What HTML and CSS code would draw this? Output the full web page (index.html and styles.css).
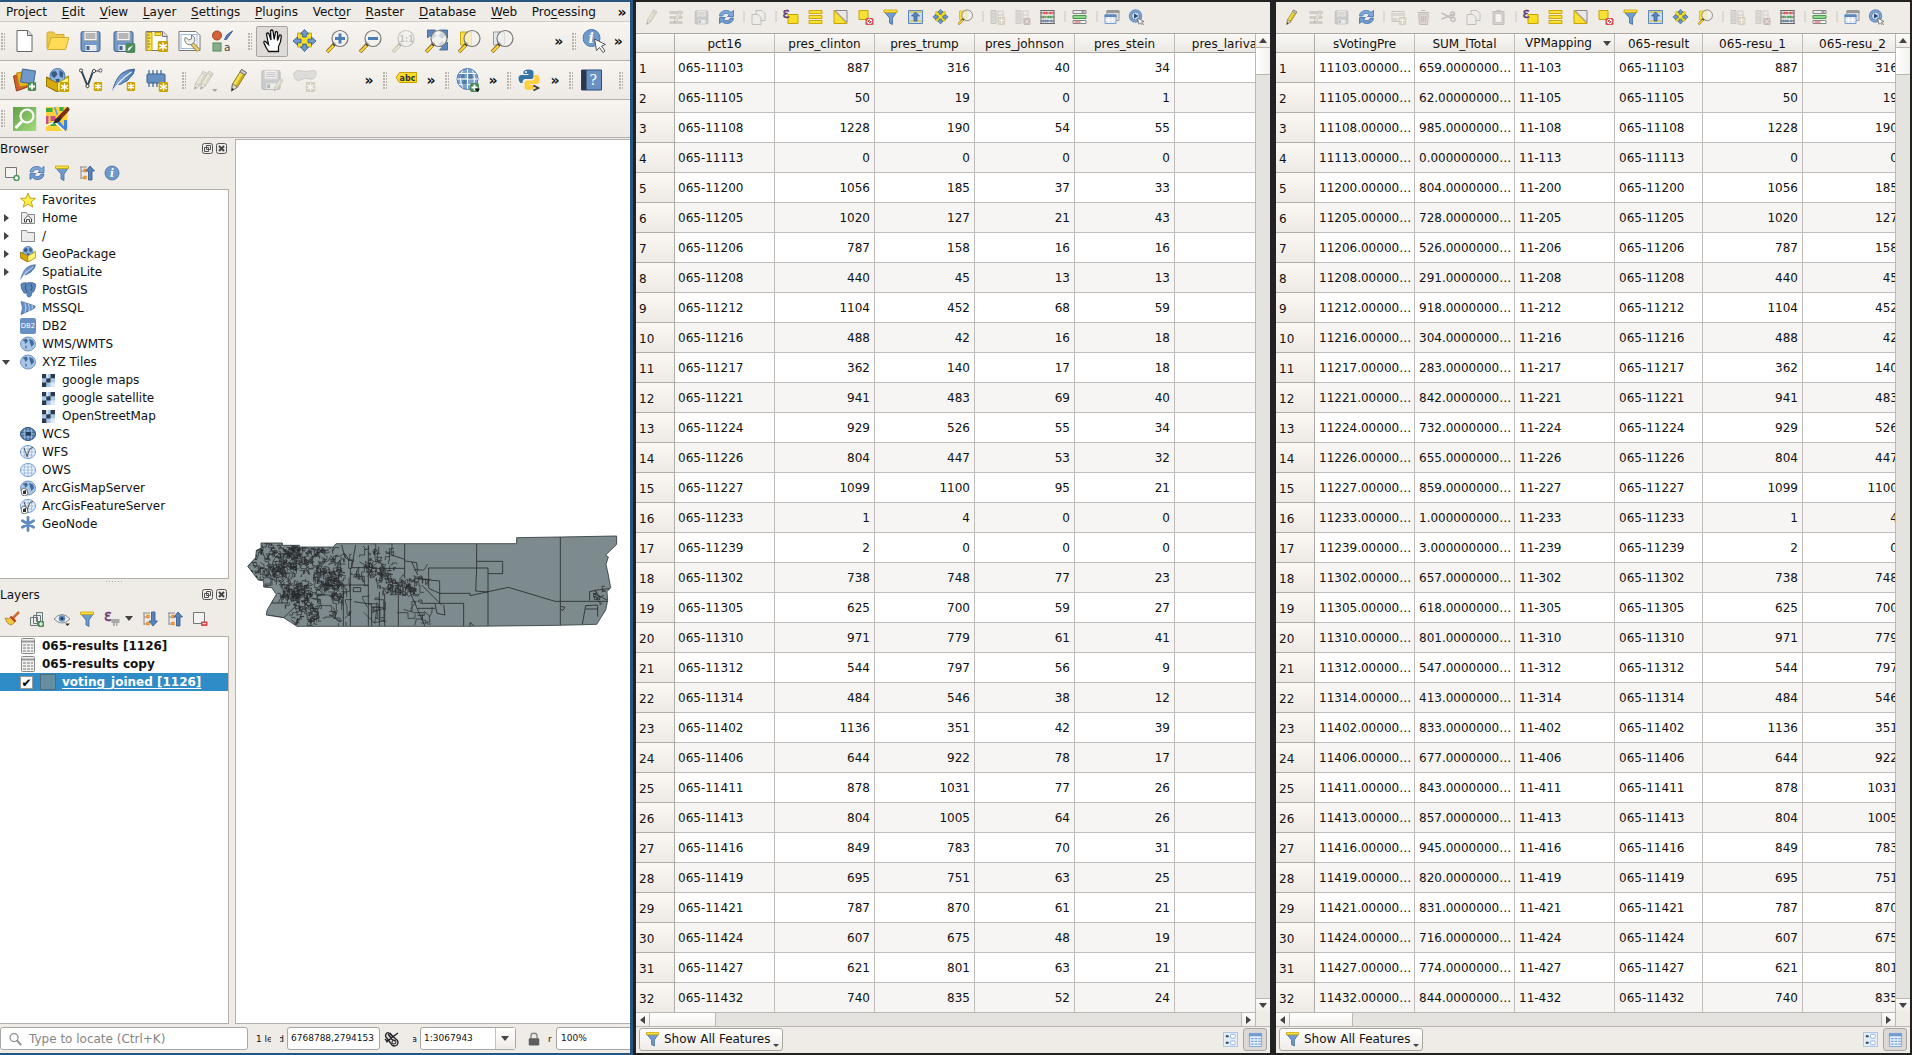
FILE: index.html
```html
<!DOCTYPE html>
<html lang="en">
<head>
<meta charset="utf-8">
<title>QGIS</title>
<link rel="stylesheet" href="styles.css">
</head>
<body>
<svg class="defs" width="0" height="0" aria-hidden="true">
  <defs>
    <linearGradient id="gBlue" x1="0" y1="0" x2="1" y2="0"><stop offset="0" stop-color="#8fb3dc"/><stop offset="1" stop-color="#4a78b0"/></linearGradient>
    <linearGradient id="gGreen" x1="0" y1="0" x2="1" y2="1"><stop offset="0" stop-color="#5f9f45"/><stop offset="1" stop-color="#a5dc80"/></linearGradient>
  </defs>
  <symbol id="badge" viewBox="0 0 11 11"><rect width="11" height="11" rx="2" fill="#c8a300"/><path d="M5.500 1.500v8M1.700 3.500l7.600 4M9.300 3.500l-7.600 4" stroke="#fff" stroke-width="1.500"/></symbol>
  <symbol id="plus" viewBox="0 0 9 9"><rect width="9" height="9" rx="2" fill="#4c8a5a"/><path d="M4.500 1.500v6M1.500 4.500h6" stroke="#fff" stroke-width="1.800"/></symbol>
  <symbol id="new" viewBox="0 0 24 24"><path d="M4.500 1.500h11l4 4.500v16.500h-15z" fill="#fff" stroke="#666" /><path d="M15 1.500v5h5" fill="#ddd" stroke="#666"/></symbol>
  <symbol id="open" viewBox="0 0 24 24"><path d="M1.500 19.500v-15q0-1.500 1.500-1.500h5l2 2.500h8.500v3" fill="#ecc94c" stroke="#d3ab2d"/><path d="M2 20.500L5.500 8.500h18L20 20.500z" fill="#ffdc57" stroke="#d3ab2d"/></symbol>
  <symbol id="save" viewBox="0 0 24 24"><rect x="2.500" y="2.500" width="19" height="20" rx="2" fill="#7299c8" stroke="#42658f"/><rect x="5.500" y="2.500" width="13" height="9" fill="#f6f6f6" stroke="#aaa"/><path d="M7 5h10M7 7h10M7 9h10" stroke="#777"/><rect x="7" y="16" width="11" height="6" fill="#e9e9e9"/><rect x="8" y="17" width="3" height="4" fill="#42658f"/></symbol>
  <symbol id="saveas" viewBox="0 0 24 24"><use href="#save" width="24" height="24"/><rect x="14" y="14" width="10" height="10" rx="2" fill="#4c8a5a"/><path d="M16 22l1-3 5-3-4 5z" fill="#fff"/></symbol>
  <symbol id="layout" viewBox="0 0 24 24"><path d="M1.500 2.500h17l4 4v15h-21z" fill="#fff" stroke="#777"/><path d="M18 2.500v5h5" fill="#ddd" stroke="#777"/><path d="M2.500 3.500h5v18h-5z" fill="#fbe34a" stroke="#c8a300"/><path d="M3 6h2M3 9h3M3 12h2M3 15h3M3 18h2" stroke="#8a7000"/><rect x="10.500" y="3.500" width="6" height="3" fill="#fbe34a" stroke="#c8a300"/><use href="#badge" x="13" y="12" width="11" height="11"/></symbol>
  <symbol id="manager" viewBox="0 0 24 24"><path d="M1.500 2.500h17l4 4v15h-21z" fill="#fff" stroke="#777"/><rect x="3.500" y="5.500" width="16" height="14" fill="none" stroke="#9cb9de"/><path d="M12 12l9 9.500" stroke="#a58b41" stroke-width="4"/><path d="M12 12l9 9.500" stroke="#f0d477" stroke-width="2"/><path d="M8 8a5 5 0 1 0 6-2v4l-3 1z" fill="#eee" stroke="#666" stroke-width=".8"/></symbol>
  <symbol id="style" viewBox="0 0 24 24"><circle cx="6.500" cy="6.500" r="4.500" fill="#d4633a" stroke="#a5401c"/><path d="M14 10.500q1-5 8-8.500l-6 8.500z" fill="#5b89bf" stroke="#3a618f"/><rect x="2.500" y="14" width="8" height="8" fill="#86b08b" stroke="#4c8a5a"/><text x="13.500" y="22" font-size="10.500" fill="#444">a</text></symbol>
  <symbol id="hand" viewBox="0 0 24 24"><path d="M8 22.500Q5 18 3.500 14q-.5-2.500 1.500-1.500l3 3L6 5q1-2 2.500 0l2 6-.5-9q1.500-2 2.500 0l1.200 8.500L15 3q1.500-1.200 2 .5v8L19 6q1.600-.7 1.800 1.500-.3 6-2.800 10v5z" fill="#fff" stroke="#111" stroke-width="1.300"/></symbol>
  <symbol id="pansel" viewBox="0 0 24 24"><path d="M5 4h14v14H5z" fill="#f8df27" stroke="#c9a91c"/><path d="M12 0.500l4 4.500h-2.200v3h-3.600v-3H8zM12 22.500l-4-4.500h2.200v-3h3.600v3H16zM.5 12L5 8v2.200h3.500v3.600H5V16zM23.500 12L19 16v-2.200h-3.500v-3.600H19V8z" fill="#6f9bce" stroke="#345f91" stroke-width=".9"/></symbol>
  <symbol id="lens" viewBox="0 0 24 24"><path d="M9 15L1.500 23" stroke="#7d6418" stroke-width="3.600"/><path d="M8 16.500L1.800 22.700" stroke="#ffd335" stroke-width="2.200"/><path d="M10 14l-2 2" stroke="#222" stroke-width="3"/><circle cx="14.500" cy="9.500" r="8" fill="#f1f1ef" fill-opacity=".75" stroke="#777" stroke-width="1.200"/></symbol>
  <symbol id="zin" viewBox="0 0 24 24"><use href="#lens" width="24" height="24"/><path d="M14.500 4.500v10M9.500 9.500h10" stroke="#4d7db5" stroke-width="3"/></symbol>
  <symbol id="zout" viewBox="0 0 24 24"><use href="#lens" width="24" height="24"/><path d="M9.500 9.500h10" stroke="#4d7db5" stroke-width="3"/></symbol>
  <symbol id="zone" viewBox="0 0 24 24"><use href="#lens" width="24" height="24"/><text x="8" y="13" font-size="8" font-weight="bold" fill="#777">1:1</text></symbol>
  <symbol id="zfull" viewBox="0 0 24 24"><path d="M3 1h8L8.500 3.500l3 3-3 3-3-3L3 9zM23 1v8l-2.500-2.500-3 3-3-3 3-3L15 1zM23 21h-8l2.500-2.500-3-3 3-3 3 3L23 13z" fill="#5b89bf" stroke="#345f91" stroke-width=".8"/><use href="#lens" width="24" height="24"/></symbol>
  <symbol id="zsel" viewBox="0 0 24 24"><path d="M3 3h11v13H3z" fill="#f9e33c" stroke="#c9a91c"/><use href="#lens" width="24" height="24"/></symbol>
  <symbol id="zlay" viewBox="0 0 24 24"><path d="M3 3h11v13H3z" fill="#e3e8e8" stroke="#999"/><use href="#lens" width="24" height="24"/></symbol>
  <symbol id="ident" viewBox="0 0 24 24"><circle cx="9" cy="9" r="8.500" fill="#6f99cb" stroke="#4d78ad"/><text x="6" y="14" font-size="14" font-weight="bold" font-style="italic" class="serif" fill="#fff">i</text><path d="M12 10l11 5.500-4 1.500 3.500 5-2 1.500-3.500-5-3 3z" fill="#fff" stroke="#555"/></symbol>
  <symbol id="addlayer" viewBox="0 0 24 24"><path d="M1 8l9-3 5 14-11 4z" fill="#d35b2c" stroke="#963c18"/><path d="M4 5l11-2 3 14-11 2z" fill="#eab420" stroke="#b4860b"/><path d="M10 1l13 2-2 13-13-2z" fill="#6f99cb" stroke="#42658f"/><use href="#plus" x="15" y="14" width="9" height="9"/></symbol>
  <symbol id="gpkg" viewBox="0 0 24 24"><path d="M1 9l11 5v10L1 18z" fill="#d9a90b" stroke="#8a6a00"/><path d="M23 8l-11 6v10l11-6z" fill="#fff57a" stroke="#a58b00"/><circle cx="12" cy="8" r="7.500" fill="#8fb2dc" stroke="#4d78ad"/><path d="M6 4l4-1 2 3-3 4-3-2zM14 2l4 3-1 5-3-2zM10 11h4v3h-3z" fill="#355c86"/><path d="M.8 9.500L12 15v8.700L.8 18z" fill="#d9a90b" stroke="#8a6a00" stroke-width=".8"/><path d="M23.200 9L12 15v8.700l11.200-6z" fill="#fff57a" stroke="#a58b00" stroke-width=".8"/></symbol>
  <symbol id="newgpkg" viewBox="0 0 24 24"><use href="#gpkg" width="24" height="24"/><use href="#badge" x="14" y="14" width="10" height="10"/></symbol>
  <symbol id="vlayer" viewBox="0 0 24 24"><path d="M3 3l6 15 5-15h7" fill="none" stroke="#445"/><path d="M3 3l6 15 5-13" fill="none" stroke="#34495e" stroke-width="2"/><g fill="#fff" stroke="#444"><circle cx="2.500" cy="2.500" r="1.600"/><circle cx="9" cy="18" r="1.600"/><circle cx="15.500" cy="3" r="1.600"/><circle cx="22" cy="2.500" r="1.600"/></g><use href="#badge" x="15" y="14" width="9" height="9"/></symbol>
  <symbol id="feather" viewBox="0 0 24 24"><path d="M1 23Q4 11 10 5.500 15 1.500 23 1q0 5-5 9-1.500 3-5 4-4 3.500-7.500 2z" fill="url(#gBlue)" stroke="#3a618f"/><path d="M1 23Q8 12 20 4" fill="none" stroke="#e8f0fa" stroke-width="1.300"/></symbol>
  <symbol id="newfeather" viewBox="0 0 24 24"><use href="#feather" width="24" height="24"/><use href="#badge" x="15" y="14" width="9" height="9"/></symbol>
  <symbol id="chip" viewBox="0 0 24 24"><path d="M4.500 2v17M8.500 2v17M12.500 2v17M16.500 2v17" stroke="#3a618f" stroke-width="1.200"/><rect x="2.500" y="6" width="18" height="9" rx="1" fill="#6790c2" stroke="#3a618f"/><use href="#badge" x="14" y="14" width="10" height="10"/></symbol>
  <symbol id="pencil" viewBox="0 0 24 24"><path d="M5 23l1-7L15 1.500l5 3L11 19z" fill="#f3db45" stroke="#8a7a20"/><path d="M10 18L18.500 4" stroke="#c3a51c" stroke-width="1.500"/><path d="M15 1.500l5 3-1.500 2.500-5-3z" fill="#c7c7c7" stroke="#777"/><path d="M5 23l1-7 5 3z" fill="#ecdcb8" stroke="#777"/><path d="M5 23l.5-3 2 1.200z" fill="#222"/></symbol>
  <symbol id="pencils" viewBox="0 0 24 24"><use href="#pencil" x="-3" width="20" height="24"/><use href="#pencil" x="3" width="20" height="24"/><path d="M18.500 21h5.500l-2.700 3z" fill="#333"/></symbol>
  <symbol id="savepen" viewBox="0 0 24 24"><use href="#save" width="23" height="23"/><use href="#pencil" x="12" y="9" width="14" height="15"/></symbol>
  <symbol id="shape" viewBox="0 0 24 24"><path d="M1 6q2-5 8-3 4 1 8 0 7-2 7 3-1 6-7 5-5-2-9 1-6 2-7-6z" fill="#bbb" stroke="#888"/><use href="#badge" x="13" y="14" width="10" height="10"/></symbol>
  <symbol id="abc" viewBox="0 0 24 24"><path d="M2.500 9.500L6 4.500h17v10H6z" fill="#f9dc2b" stroke="#c8a300"/><text x="6" y="12.500" font-size="8" font-weight="bold" fill="#333">abc</text></symbol>
  <symbol id="wglobe" viewBox="0 0 24 24"><circle cx="12" cy="11" r="10.500" fill="#7ba3d2" stroke="#4d78ad"/><path d="M12 1v20M1.500 11h21M3.500 5.500h17M3.500 16.500h17M7 2.500q-4 8 0 17M17 2.500q4 8 0 17" fill="none" stroke="#fff"/><path d="M4 6h5v4H4zM13 6h4v5h-4zM7 12h4v5H7z" fill="#315b8d" opacity=".55"/><use href="#plus" x="14.500" y="15" width="9" height="9"/><path d="M19 20.500h6L22 24z" fill="#111"/></symbol>
  <symbol id="python" viewBox="0 0 24 24"><path d="M6 7V4q0-2.500 5-2.500T16 4v5q0 2-2 2H8q-3 0-3 4H3q-2-1-2-4.500T4 7h7V6H6z" fill="#3873a5"/><path d="M16 7h3q3 0 3 4.500T19 16h-7v1h5v2.500Q17 22 12 22t-5-2.500V15q0-2.500 2.500-2.500H14q3 0 3-3z" fill="#ffcf3f"/><circle cx="8.500" cy="4" r="1" fill="#fff"/><path d="M16 17.500l5 2.500-5 2.500" fill="none" stroke="#333" stroke-width="1.500"/></symbol>
  <symbol id="book" viewBox="0 0 24 24"><path d="M2 2h20v20H2z" fill="#6890c3" stroke="#2f4d73"/><path d="M2 2h5v20H2z" fill="#28394f"/><text x="10" y="17" font-size="14" class="serif" fill="#fff">?</text></symbol>
  <symbol id="glens" viewBox="0 0 24 24"><path d="M0 0h24v24H0z" fill="url(#gGreen)"/><circle cx="14.500" cy="9" r="6.500" fill="none" stroke="#fff" stroke-width="2.200"/><path d="M10 14l-7 7" stroke="#fff" stroke-width="3"/></symbol>
  <symbol id="osm" viewBox="0 0 24 24"><path d="M0 0h22v24H0z" fill="#fbd23e"/><path d="M0 1h7v4H0zM5 15h6v4H5zM14 0h4v4h-4z" fill="#3aae3e"/><path d="M0 9h3v8H0zM5 9h5v5H5z" fill="#c94f86"/><path d="M12 14l8 10M20 13v9" fill="none" stroke="#3f82e0" stroke-width="3"/><path d="M9 0l3 8" stroke="#5c9be8" stroke-width="1.500"/><path d="M0 19l9-4 10 9" fill="none" stroke="#fff" stroke-width="1.500"/><path d="M23.500 1L13 12" stroke="#7d2d0a" stroke-width="4"/><path d="M14 10q-5 1-5 4-1 2-2 2 6 1 9-4z" fill="#2d2a25"/></symbol>
  <symbol id="addsq" viewBox="0 0 16 16"><path d="M1.500 2.500h11v10h-11z" fill="#f4f3f1" stroke="#777"/><circle cx="12.500" cy="13" r="2.500" fill="#fff" stroke="#4c9a58" stroke-width="1.500"/></symbol>
  <symbol id="remsq" viewBox="0 0 16 16"><path d="M1.500 1.500h11v11h-11z" fill="#f4f3f1" stroke="#777"/><rect x="9" y="10.500" width="6.500" height="4.500" rx="1" fill="#d9404a"/><path d="M10.500 12.700h3.500" stroke="#fff"/></symbol>
  <symbol id="refresh" viewBox="0 0 16 16"><path d="M1 7Q1.500 1.500 8 1.500q3 0 4.500 2L15 1.500V7.500H9L11 5.500Q6 2.500 4 7z" fill="#7fa9da" stroke="#3f70aa" stroke-width=".8"/><path d="M15 9q-.5 5.500-7 5.500-3 0-4.500-2L1 14.500V8.500h6L5 10.500q5 3 7-1.500z" fill="#6f9bd0" stroke="#3f70aa" stroke-width=".8"/></symbol>
  <symbol id="funnel" viewBox="0 0 16 16"><path d="M1.500 2.500h13L10 9v6.500L7 14V9z" fill="#6f9bce" stroke="#3f6a9f" stroke-width=".8"/><path d="M1.500 1h13v2.500h-13z" fill="#fae04a" stroke="#c8a300" stroke-width=".8"/></symbol>
  <symbol id="up" viewBox="0 0 16 16"><path d="M1 2h7M2 2v12M2 6h4M2 13h4" fill="none" stroke="#888"/><path d="M5 4.500h2v2H5zM5 11.500h2v2H5z" fill="#fff" stroke="#f08a1c" stroke-width="1.300"/><path d="M11 1l4.500 5H13v9H9.500V6H7z" fill="#5685bd" stroke="#2f5789" stroke-width=".8"/></symbol>
  <symbol id="down" viewBox="0 0 16 16"><path d="M1 2h7M2 2v12M2 6h4M2 13h4" fill="none" stroke="#888"/><path d="M5 4.500h2v2H5zM5 11.500h2v2H5z" fill="#fff" stroke="#f08a1c" stroke-width="1.300"/><path d="M11 15l4.500-5H13V1H9.500v9H7z" fill="#5685bd" stroke="#2f5789" stroke-width=".8"/></symbol>
  <symbol id="info" viewBox="0 0 16 16"><circle cx="8" cy="8" r="7" fill="#6f99cb" stroke="#557fb3"/><text x="6" y="12" font-size="10.500" font-weight="bold" font-style="italic" class="serif" fill="#fff">i</text></symbol>
  <symbol id="star" viewBox="0 0 16 16"><path d="M8 1l2 5.200 5.500.2-4.300 3.400 1.600 5.400L8 12l-4.800 3.200 1.600-5.400L.5 6.400 6 6.200z" fill="#fdee49" stroke="#c2a41e"/></symbol>
  <symbol id="folder" viewBox="0 0 16 16"><path d="M1.500 2.500h5l1 2h7v9h-13z" fill="#ececec" stroke="#8b8b8b"/></symbol>
  <symbol id="home" viewBox="0 0 16 16"><use href="#folder" width="16" height="16"/><path d="M4.500 9L8 5.500 11.500 9v3H9.500V9.500h-3V12h-2z" fill="#fff" stroke="#333" stroke-width=".9"/></symbol>
  <symbol id="pg" viewBox="0 0 16 16"><path d="M1 2q3-2 6-1 6-1.500 8.500 1 .5 4-2 8H12q-.3 5-3 5t-2-5q-1 2-3 1Q.5 7 1 2z" fill="#5b87bb" stroke="#3c6595" stroke-width=".8"/><path d="M6 2q-2 4 1 8M11 2q2 4 0 7" fill="none" stroke="#294d77" stroke-width=".8"/></symbol>
  <symbol id="ms" viewBox="0 0 16 16"><path d="M1 1.500L15 6q0 2-1 2.500L1 14.500Q4 8 1 1.500z" fill="#638fc3" stroke="#41699a" stroke-width=".8"/><path d="M5 3q2 5 0 9.500M8.500 4q1.500 4 .5 7M12 5q.8 3 0 4" fill="none" stroke="#dbe7f5" stroke-width=".8"/></symbol>
  <symbol id="db2" viewBox="0 0 16 16"><rect width="16" height="16" rx="2" fill="#668fc4"/><text x=".8" y="9.700" font-size="6.800" fill="#fff">DB2</text></symbol>
  <symbol id="globe" viewBox="0 0 16 16"><ellipse cx="8" cy="8" rx="7.500" ry="7" fill="#a9c5e6" stroke="#7397c2"/><path d="M2.500 4l4-1.500L8 5 5.500 8l-1-2.500zM9 3l4 1.500 1 3.500-2.500 3L10 7zM5 9.500l2 1-1 3z" fill="#3f6a9a"/></symbol>
  <symbol id="tiles" viewBox="0 0 13 13"><path d="M0 0h13v13H0z" fill="#a9c6e9"/><path d="M0 0h4.300v4.300H0zM8.600 0H13v4.300H8.600zM4.300 4.300h4.300v4.300H4.300zM0 8.600h4.300V13H0z" fill="#2b3b50"/><path d="M4.300 0h2v4.300h-2zM8.600 8.600H13V13H8.600z" fill="#dfe9f5"/></symbol>
  <symbol id="wcs" viewBox="0 0 16 16"><ellipse cx="8" cy="8" rx="7.500" ry="6.500" fill="#416b9a" stroke="#2c4f79"/><path d="M8 2v12M1 8h14M2.500 5h11M2.500 11h11M5 2.500q-2 5.500 0 11M11 2.500q2 5.500 0 11" fill="none" stroke="#a9c8ea" stroke-width=".8"/><path d="M6 6h5v3.500H6z" fill="#1f3d60"/></symbol>
  <symbol id="ows" viewBox="0 0 16 16"><ellipse cx="8" cy="8" rx="7.500" ry="6.500" fill="#f4f8fd" stroke="#6f97cd"/><path d="M8 2v12M1 8h14M2.500 5h11M2.500 11h11M5 2.500q-2 5.500 0 11M11 2.500q2 5.500 0 11" fill="none" stroke="#8fb2de" stroke-width=".8"/></symbol>
  <symbol id="wfs" viewBox="0 0 16 16"><use href="#ows" width="16" height="16"/><path d="M4 4l3 8 3-7.500 3-1" fill="none" stroke="#555"/><circle cx="7" cy="12" r="1" fill="#666"/></symbol>
  <symbol id="ams" viewBox="0 0 16 16"><use href="#globe" width="16" height="16"/><path d="M1 10l3-2 3 2 1 4-3 2-3-1z" fill="#fff" stroke="#555" stroke-width=".8"/><path d="M3 11l3-1v4H3z" fill="#333"/></symbol>
  <symbol id="afs" viewBox="0 0 16 16"><use href="#wfs" width="16" height="16"/><path d="M1 10l3-2 3 2 1 4-3 2-3-1z" fill="#fff" stroke="#555" stroke-width=".8"/><path d="M3 11l3-1v4H3z" fill="#333"/></symbol>
  <symbol id="gnode" viewBox="0 0 16 16"><path d="M8 1.500v13M2.400 4.700l11.200 6.600M13.600 4.700L2.400 11.300" stroke="#5f8bc0" stroke-width="2.800" stroke-linecap="round"/></symbol>
  <symbol id="brush" viewBox="0 0 16 16"><path d="M15 1L8 8" stroke="#cf6d28" stroke-width="2.500"/><path d="M1 7q4 1.500 6-1l4.500 4.500q-3 3.500-5.500 3.500Q2 11.500 1 7z" fill="#ecc744" stroke="#b37c1e" stroke-width=".8"/><path d="M6.500 5.500l5 5" stroke="#c23a1d" stroke-width="2.300"/></symbol>
  <symbol id="group" viewBox="0 0 16 16"><path d="M1.500 6.500h7v8h-7zM4.500 4.500h7v8h-7zM7.500 1.500h6v9h-6z" fill="#ecebe9" stroke="#677"/><use href="#plus" x="9" y="10" width="6" height="6"/></symbol>
  <symbol id="eye" viewBox="0 0 16 16"><path d="M0 8q8-9 16 0-8 8-16 0z" fill="#f3f3f3" stroke="#888"/><circle cx="8" cy="7.500" r="3.300" fill="#5f8cc2"/><circle cx="8" cy="7.500" r="1.500" fill="#1f3d60"/><path d="M11 12.500h5L13.500 15z" fill="#333"/></symbol>
  <symbol id="eps" viewBox="0 0 16 16"><text x="0" y="10" font-size="15" fill="#70407c" stroke="#70407c" stroke-width=".5">ε</text><path d="M7.500 8h8v4h-2v3h-1.500v-3H11v3H9v-3H7.500z" fill="#aaa"/></symbol>
  <symbol id="tbl" viewBox="0 0 16 16"><rect x="1.500" y=".5" width="13" height="15" rx="1" fill="#f1f1ef" stroke="#888"/><path d="M2 3.500h12" stroke="#999" stroke-width="2"/><path d="M3 7h10M3 10h10M3 13h10" stroke="#777" stroke-dasharray="3 1"/></symbol>
  <symbol id="multi" viewBox="0 0 16 16"><path d="M1 2h13v3H1zM1 7h13v3H1zM1 12h13v3H1z" fill="#999"/><use href="#pencil" x="3" y="0" width="13" height="15"/></symbol>
  <symbol id="copy" viewBox="0 0 16 16"><path d="M5.500 1.500h6l3 3v7h-9z" fill="#eee" stroke="#777"/><path d="M1.500 5.500h6l3 3v7h-9z" fill="#eee" stroke="#777"/></symbol>
  <symbol id="paste" viewBox="0 0 16 16"><path d="M2.500 2.500h11v13h-11z" fill="#aaa" stroke="#777"/><path d="M4.500 4.500h5l2 2v7h-7z" fill="#fff" stroke="#888"/><path d="M6 1h4v2H6z" fill="#777"/></symbol>
  <symbol id="cut" viewBox="0 0 16 16"><path d="M1 4l10 5M1 10l13-5" stroke="#777" stroke-width="1.500"/><circle cx="12.500" cy="10.500" r="2" fill="none" stroke="#777" stroke-width="1.500"/><circle cx="12" cy="5" r="2" fill="none" stroke="#777" stroke-width="1.500"/></symbol>
  <symbol id="trash" viewBox="0 0 16 16"><path d="M3 5h10l-1 10.500H4z" fill="#dbaaaa" stroke="#a66"/><path d="M2 3.500h12M6 1.500h4M6 7v6M8 7v6M10 7v6" stroke="#a66" stroke-width="1.200"/></symbol>
  <symbol id="addrow" viewBox="0 0 16 16"><path d="M1.500 2.500h12v10h-12z" fill="#eee" stroke="#888"/><path d="M1 4h13v3H1zM1 9h6v3H1z" fill="#c9b18f"/><use href="#badge" x="8" y="8" width="8" height="8"/></symbol>
  <symbol id="selexp" viewBox="0 0 16 16"><path d="M5.500 5.500h10v9h-10z" fill="#f8df27" stroke="#c8a300"/><text x="0" y="9" font-size="13.500" fill="#623a70" stroke="#623a70" stroke-width=".5">ε</text></symbol>
  <symbol id="selall" viewBox="0 0 16 16"><path d="M1.500 1.500h13v3h-13zM1.500 6.500h13v3h-13zM1.500 11.500h13v3h-13z" fill="#f9e034" stroke="#c8a300" stroke-width=".9"/></symbol>
  <symbol id="invert" viewBox="0 0 16 16"><path d="M1.500 1.500v13h13z" fill="#f9e034" stroke="#c8a300"/><path d="M2.500 1.500h12v12z" fill="#e9e9e9" stroke="#888"/></symbol>
  <symbol id="desel" viewBox="0 0 16 16"><path d="M1.500 1.500h9v9h-9z" fill="#f9e034" stroke="#c8a300"/><rect x="8" y="9" width="8" height="7" rx="1.500" fill="#d84a50"/><circle cx="12" cy="12.500" r="2.300" fill="none" stroke="#fff"/><path d="M10.500 14l3-3" stroke="#fff"/></symbol>
  <symbol id="totop" viewBox="0 0 16 16"><path d="M1 1.500h14v13H1z" fill="#c9daee" stroke="#5b87bb"/><path d="M2 3h12M2 12h12" stroke="#d8c552" stroke-width="1.500"/><path d="M8 3l4 4H9.500v5h-3V7H4z" fill="#5685bd" stroke="#2f5789" stroke-width=".7"/></symbol>
  <symbol id="newcol" viewBox="0 0 16 16"><path d="M1.500 1.500h5v13h-5z" fill="#bbb" stroke="#888"/><path d="M8.500 2v12h5V2zM8 6h6M2 5h4M2 8h4M2 11h4" fill="none" stroke="#999"/><use href="#badge" x="8" y="8" width="8" height="8"/></symbol>
  <symbol id="delcol" viewBox="0 0 16 16"><path d="M1.500 1.500h5v13h-5z" fill="#dbb" stroke="#b88"/><path d="M8.500 2v12h5V2zM8 6h6M2 5h4M2 8h4M2 11h4" fill="none" stroke="#a99"/><rect x="9" y="9" width="7" height="7" rx="1" fill="#d55"/><path d="M10.500 10.500l4 4M14.500 10.500l-4 4" stroke="#fff"/></symbol>
  <symbol id="abacus" viewBox="0 0 16 16"><path d="M1.500 1v14M14.500 1v14M.5 14.500h15M1 1.500h14M1 4h14M1 8h14M1 12h14" fill="none" stroke="#666"/><g stroke-width="2.500"><path d="M4 4h4M10 4h3" stroke="#e25050" stroke-dasharray="1.800 .5"/><path d="M3 8h3M8 8h5" stroke="#45a456" stroke-dasharray="1.800 .5"/><path d="M3 12h6M11 12h2" stroke="#5b87bb" stroke-dasharray="1.800 .5"/></g></symbol>
  <symbol id="cond" viewBox="0 0 16 16"><path d="M1.500 1.500h13v3h-13z" fill="#eee" stroke="#888"/><path d="M1.500 6.500h13v3h-13z" fill="#8fd88f" stroke="#4a9a50"/><path d="M1.500 11.500h13v3h-13z" fill="#fff" stroke="#888"/><path d="M3 13h6" stroke="#d33"/><path d="M10 3h3" stroke="#555"/></symbol>
  <symbol id="dock" viewBox="0 0 16 16"><path d="M3.500 1.500h12v10h-12z" fill="#ddd" stroke="#999"/><path d="M3 3h13" stroke="#999" stroke-width="2"/><path d="M1.500 5.500h11v9h-11z" fill="#dce8f5" stroke="#7b9fca"/><path d="M1 7h12" stroke="#5b87bb" stroke-width="2"/><path d="M5 8v6M9 8v6M2 11h10" stroke="#fff"/></symbol>
  <symbol id="action" viewBox="0 0 16 16"><circle cx="7" cy="7" r="6" fill="#8aafda" stroke="#6d93c1" stroke-width="1.500"/><circle cx="7" cy="7" r="4" fill="#cfe0f2" stroke="#567fae"/><path d="M5.500 4.500L10 7 5.500 9.500z" fill="#24496f"/><path d="M9 9l6.500 3.500-2.500.5 2 2.500-1 .8-2-2.500-1.500 1.500z" fill="#fff" stroke="#666" stroke-width=".8"/></symbol>
  <symbol id="formv" viewBox="0 0 16 16"><path d="M.5 .5h15v15H.5z" fill="#e4eefa" stroke="#a6c2e2"/><path d="M3 4.500h3M3 11.500h3" stroke="#345" stroke-width="2"/><rect x="8" y="2.500" width="5" height="4" rx="1" fill="#fff" stroke="#8fb2de"/><rect x="8" y="9.500" width="5" height="4" rx="1" fill="#fff" stroke="#8fb2de"/></symbol>
  <symbol id="tablev" viewBox="0 0 16 16"><path d="M1.500 1.500h13v14h-13z" fill="#e4eefa" stroke="#7fa6d3"/><path d="M1 3h14" stroke="#6f9bce" stroke-width="3"/><path d="M3 7h3M7 7h3M11 7h2.500M3 10h3M7 10h3M11 10h2.500M3 13h3M7 13h3M11 13h2.500" stroke="#7fa6d3" stroke-width="1.300"/></symbol>
  <symbol id="float" viewBox="0 0 11 11"><rect x=".5" y=".5" width="10" height="10" rx="2" fill="none" stroke="#555"/><path d="M4.500 2.500h4v4h-4zM2.500 4.500h4v4h-4z" fill="#efebe7" stroke="#555"/></symbol>
  <symbol id="close" viewBox="0 0 11 11"><rect x=".5" y=".5" width="10" height="10" rx="2" fill="none" stroke="#555"/><path d="M3 3l5 5M8 3L3 8" stroke="#444" stroke-width="2"/></symbol>
  <symbol id="mouse" viewBox="0 0 16 16"><path d="M2 3q1-2 3-1l8 7q2 2 0 5-3 2-5 0L2 6q-1-1 0-3z" fill="#ddd" stroke="#222" stroke-width="1.300"/><path d="M6 2l3 4M2 11l12-9M1 8l3 3M5 9l6-5M4 3l3 4M7 8l4 2" stroke="#222" stroke-width="1.300"/><circle cx="10" cy="11" r="2" fill="none" stroke="#222"/></symbol>
  <symbol id="lock" viewBox="0 0 16 16"><path d="M4.500 8V4.500q0-3 3.500-3t3.500 3V8" fill="none" stroke="#8a8a8a" stroke-width="1.600"/><rect x="2" y="7" width="12" height="8.500" rx="1.500" fill="#5e5e5e"/></symbol>
  <symbol id="mag" viewBox="0 0 14 14"><circle cx="5.500" cy="5.500" r="4.300" fill="none" stroke="#8c8c8c" stroke-width="1.300"/><path d="M8.500 8.500l4.500 5" stroke="#8c8c8c" stroke-width="2"/></symbol>
</svg>

<div class="desktop">
  <section class="main-window">
    <nav class="menubar">
      <span>Pro<u>j</u>ect</span><span><u>E</u>dit</span><span><u>V</u>iew</span><span><u>L</u>ayer</span><span><u>S</u>ettings</span><span><u>P</u>lugins</span><span>Vect<u>o</u>r</span><span><u>R</u>aster</span><span><u>D</u>atabase</span><span><u>W</u>eb</span><span>Pro<u>c</u>essing</span>
      <b class="more">»</b>
    </nav>
    <div class="toolbar">
      <i class="grip"></i>
      <svg class="tool"><use href="#new"/></svg><svg class="tool"><use href="#open"/></svg><svg class="tool"><use href="#save"/></svg><svg class="tool"><use href="#saveas"/></svg><svg class="tool"><use href="#layout"/></svg><svg class="tool"><use href="#manager"/></svg><svg class="tool"><use href="#style"/></svg>
      <i class="grip spaced"></i>
      <span class="pressed"><svg class="tool"><use href="#hand"/></svg></span><svg class="tool"><use href="#pansel"/></svg><svg class="tool"><use href="#zin"/></svg><svg class="tool"><use href="#zout"/></svg><svg class="tool off"><use href="#zone"/></svg><svg class="tool"><use href="#zfull"/></svg><svg class="tool"><use href="#zsel"/></svg><svg class="tool"><use href="#zlay"/></svg>
      <b class="ext push-a">»</b>
      <i class="grip"></i><svg class="tool narrow"><use href="#ident"/></svg><b class="ext">»</b>
    </div>
    <div class="toolbar">
      <i class="grip"></i>
      <svg class="tool"><use href="#addlayer"/></svg><svg class="tool"><use href="#newgpkg"/></svg><svg class="tool"><use href="#vlayer"/></svg><svg class="tool"><use href="#newfeather"/></svg><svg class="tool"><use href="#chip"/></svg>
      <i class="grip spaced"></i>
      <svg class="tool off"><use href="#pencils"/></svg><svg class="tool"><use href="#pencil"/></svg><svg class="tool off"><use href="#savepen"/></svg><svg class="tool off"><use href="#shape"/></svg>
      <b class="ext push-b">»</b>
      <i class="grip"></i><svg class="tool narrow"><use href="#abc"/></svg><b class="ext">»</b>
      <i class="grip"></i><svg class="tool narrow"><use href="#wglobe"/></svg><b class="ext">»</b>
      <i class="grip"></i><svg class="tool narrow"><use href="#python"/></svg><b class="ext">»</b>
      <i class="grip"></i><svg class="tool narrow"><use href="#book"/></svg><i class="grip last"></i>
    </div>
    <div class="toolbar">
      <i class="grip"></i><svg class="tool"><use href="#glens"/></svg><svg class="tool"><use href="#osm"/></svg>
    </div>
    <div class="workspace">
      <aside class="docks">
        <header class="dock-title">Browser<span><svg><use href="#float"/></svg><svg><use href="#close"/></svg></span></header>
        <div class="dock-tools browser-tools"><svg><use href="#addsq"/></svg><svg><use href="#refresh"/></svg><svg><use href="#funnel"/></svg><svg><use href="#up"/></svg><svg><use href="#info"/></svg></div>
        <ul class="tree browser-tree">
          <li><i></i><svg><use href="#star"/></svg>Favorites</li>
          <li><i class="closed"></i><svg><use href="#home"/></svg>Home</li>
          <li><i class="closed"></i><svg><use href="#folder"/></svg>/</li>
          <li><i class="closed"></i><svg><use href="#gpkg"/></svg>GeoPackage</li>
          <li><i class="closed"></i><svg><use href="#feather"/></svg>SpatiaLite</li>
          <li><i></i><svg><use href="#pg"/></svg>PostGIS</li>
          <li><i></i><svg><use href="#ms"/></svg>MSSQL</li>
          <li><i></i><svg><use href="#db2"/></svg>DB2</li>
          <li><i></i><svg><use href="#globe"/></svg>WMS/WMTS</li>
          <li><i class="opened"></i><svg><use href="#globe"/></svg>XYZ Tiles</li>
          <li class="child"><svg><use href="#tiles"/></svg>google maps</li>
          <li class="child"><svg><use href="#tiles"/></svg>google satellite</li>
          <li class="child"><svg><use href="#tiles"/></svg>OpenStreetMap</li>
          <li><i></i><svg><use href="#wcs"/></svg>WCS</li>
          <li><i></i><svg><use href="#wfs"/></svg>WFS</li>
          <li><i></i><svg><use href="#ows"/></svg>OWS</li>
          <li><i></i><svg><use href="#ams"/></svg>ArcGisMapServer</li>
          <li><i></i><svg><use href="#afs"/></svg>ArcGisFeatureServer</li>
          <li><i></i><svg><use href="#gnode"/></svg>GeoNode</li>
        </ul>
        <div class="splitter"></div>
        <header class="dock-title">Layers<span><svg><use href="#float"/></svg><svg><use href="#close"/></svg></span></header>
        <div class="dock-tools layer-tools"><svg><use href="#brush"/></svg><svg><use href="#group"/></svg><svg><use href="#eye"/></svg><svg><use href="#funnel"/></svg><svg><use href="#eps"/></svg><i class="opened"></i><svg><use href="#down"/></svg><svg><use href="#up"/></svg><svg><use href="#remsq"/></svg></div>
        <ul class="tree layer-tree">
          <li><i></i><svg><use href="#tbl"/></svg>065-results [1126]</li>
          <li><i></i><svg><use href="#tbl"/></svg>065-results copy</li>
          <li class="selected"><i></i><span class="check">✔</span><span class="swatch"></span><u>voting_joined [1126]</u></li>
        </ul>
      </aside>
      <div class="canvas">
        <svg class="map" viewBox="0 0 1170 330">
          <clipPath id="county"><path id="outline" d="M78 54H142V61H193V66H295L303 56H845V38L975 36 1145 33V58L1112 90 1120 96 1113 118 1120 150 1127 188 1116 200 1118 226 1112 255 1085 298 970 301 705 304H186L146 278 94 270 96 256 124 208 110 188 86 186V168L70 165 38 124 62 98 64 76 78 70z"/></clipPath>
          <use href="#outline" fill="#7e8b8e"/>
          <g clip-path="url(#county)" fill="none" stroke="#262a2b" stroke-width="2.500">
            <g id="mesh" stroke-width="2.100"></g>
            <path d="M509 57V160M581 129H759V304M725 57V128L722 198 758 201M725 109H803V146H760M581 129V190L614 205H705V212L760 200 820 187 960 229H1120M976 36V300M614 168V234M520 190L545 247 570 304M556 235H686V304M705 304V292L718 304M400 60V304M433 200V304M470 90L509 103M449 205V304M490 210V304M548 250H600M346 128V304M362 60L350 128H400M410 130H509M545 160L583 165 614 168M355 188H377V200H355V188M357 230L410 238V304M560 180L620 240M600 236L606 265 630 270 626 240M1042 298L1052 242 1088 240V275M1052 252H1088M1064 226V200L1085 195 1128 190M1075 205L1118 226M1080 195L1095 218M976 244L990 247 984 256 976 252M320 60L330 98 357 110M300 180H400M325 180V304M530 110L548 150M509 108L545 113 548 140M94 234H160M94 270L146 278 186 240"/>
          </g>
          <use href="#outline" fill="none" stroke="#30383a" stroke-width="2.500"/>
        </svg>
      </div>
    </div>
    <footer class="status">
      <label class="locator"><svg><use href="#mag"/></svg>Type to locate (Ctrl+K)</label>
      <span class="clip clip-a">1 le</span><span class="clip clip-b">d</span>
      <span class="field coord">6768788,2794153</span>
      <svg class="mouse"><use href="#mouse"/></svg>
      <span class="clip clip-c">a</span>
      <span class="field scale">1:3067943<i><b class="opened"></b></i></span>
      <svg class="lock"><use href="#lock"/></svg>
      <span class="clip clip-d">r</span>
      <span class="field zoom">100%</span>
    </footer>
  </section>

  <section class="table-window results">
    <div class="table-tools">
      <svg class="off"><use href="#pencil"/></svg><svg class="off"><use href="#multi"/></svg><svg class="off"><use href="#save"/></svg><svg><use href="#refresh"/></svg><i></i>
      <svg class="off"><use href="#copy"/></svg><i></i>
      <svg><use href="#selexp"/></svg><svg><use href="#selall"/></svg><svg><use href="#invert"/></svg><svg><use href="#desel"/></svg><svg><use href="#funnel"/></svg><svg><use href="#totop"/></svg><svg><use href="#pansel"/></svg><svg><use href="#zsel"/></svg><i></i>
      <svg class="off"><use href="#newcol"/></svg><svg class="off"><use href="#delcol"/></svg><svg><use href="#abacus"/></svg><i></i>
      <svg><use href="#cond"/></svg><i></i><svg><use href="#dock"/></svg><svg><use href="#action"/></svg>
    </div>
    <div class="grid-area">
      <div class="viewport" id="results-grid"></div>
      <div class="vscroll"><b class="arrow up"></b><span></span><b class="arrow down"></b></div>
      <div class="hscroll"><b class="arrow left"></b><span></span><b class="arrow right"></b></div>
      <div class="corner"></div>
    </div>
    <footer class="table-footer"><button><svg><use href="#funnel"/></svg>Show All Features<i></i></button><svg class="view"><use href="#formv"/></svg><span class="active"><svg class="view"><use href="#tablev"/></svg></span></footer>
  </section>

  <section class="table-window joined">
    <div class="table-tools">
      <svg><use href="#pencil"/></svg><svg class="off"><use href="#multi"/></svg><svg class="off"><use href="#save"/></svg><svg><use href="#refresh"/></svg><i></i>
      <svg class="off"><use href="#addrow"/></svg><svg class="off"><use href="#trash"/></svg><svg class="off"><use href="#cut"/></svg><svg class="off"><use href="#copy"/></svg><svg class="off"><use href="#paste"/></svg><i></i>
      <svg><use href="#selexp"/></svg><svg><use href="#selall"/></svg><svg><use href="#invert"/></svg><svg><use href="#desel"/></svg><svg><use href="#funnel"/></svg><svg><use href="#totop"/></svg><svg><use href="#pansel"/></svg><svg><use href="#zsel"/></svg><i></i>
      <svg class="off"><use href="#newcol"/></svg><svg class="off"><use href="#delcol"/></svg><svg><use href="#abacus"/></svg><i></i>
      <svg><use href="#cond"/></svg><i></i><svg><use href="#dock"/></svg><svg><use href="#action"/></svg>
    </div>
    <div class="grid-area">
      <div class="viewport" id="joined-grid"></div>
      <div class="vscroll"><b class="arrow up"></b><span></span><b class="arrow down"></b></div>
      <div class="hscroll"><b class="arrow left"></b><span></span><b class="arrow right"></b></div>
      <div class="corner"></div>
    </div>
    <footer class="table-footer"><button><svg><use href="#funnel"/></svg>Show All Features<i></i></button><svg class="view"><use href="#formv"/></svg><span class="active"><svg class="view"><use href="#tablev"/></svg></span></footer>
  </section>
</div>
<script src="app.js"></script>
</body>
</html>
```
FILE: styles.css
```css
* { box-sizing: border-box; }
body { margin: 0; font: 12px/14px "DejaVu Sans", sans-serif; color: #111; overflow: hidden; }
svg text { font-family: "DejaVu Sans", sans-serif; }
svg text.serif { font-family: "DejaVu Serif", serif; }
.defs { position: absolute; }
svg { flex: none; }
ul { margin: 0; padding: 0; list-style: none; }

.desktop { display: flex; width: 1912px; height: 1055px; background: #222; }

/* main window */
.main-window { width: 633px; height: 1055px; padding: 2px 3px 2px 0; background: #27557d; display: flex; flex-direction: column; overflow: hidden; }
.menubar { height: 20px; flex: none; background: #efebe7; border-bottom: 1px solid #cfcbc7; display: flex; align-items: center; padding: 1px 0 0 6px; gap: 14.700px; white-space: nowrap; }
.menubar u { text-underline-offset: 2px; }
.more, .ext { font-size: 14px; font-weight: bold; }
.more { margin-left: 7px; }
.toolbar { height: 39px; flex: none; display: flex; align-items: center; background: linear-gradient(#f8f5f1, #edeae6); border-bottom: 1px solid #b5b0ac; }
.toolbar:nth-of-type(3) { height: 38px; }
.grip { flex: none; width: 8px; height: 17px; background: radial-gradient(circle at 1px 1px, #b9b5b1 .8px, transparent 1px) 1px 0 / 3px 3px no-repeat; background-repeat: repeat; background-clip: content-box; padding: 0 3px 0 1px; }
.grip.spaced { margin-left: 8px; }
.grip.last { margin-left: 11px; }
.tool { width: 33px; height: 24px; padding: 0 4.500px; }
.tool.narrow { width: 31px; padding: 0 3.500px; }
.off { filter: grayscale(.75); opacity: .38; }
.pressed { flex: none; width: 32px; height: 31px; margin-left: 1px; background: #dfdbd8; border: 1px solid #aaa5a2; border-radius: 2px; display: flex; align-items: center; justify-content: center; }
.ext { width: 20px; margin-right: 3px; padding-bottom: 1px; text-align: center; }
.push-a { margin-left: 31px; margin-right: 3px; }
.push-b { margin-left: 38px; }

.workspace { flex: 1; display: flex; min-height: 0; background: #efebe7; }
.docks { width: 235px; display: flex; flex-direction: column; padding-right: 6px; flex: none; }
.dock-title { height: 21px; flex: none; display: flex; align-items: center; justify-content: space-between; padding-right: 2px; }
.dock-title span { display: flex; gap: 3px; }
.dock-title svg { width: 11px; height: 11px; }
.dock-tools { flex: none; display: flex; gap: 9px; padding-left: 4px; align-items: center; }
.dock-tools svg { width: 16px; height: 16px; }
.browser-tools { height: 30px; padding-bottom: 2px; }
.layer-tools { height: 31px; padding-bottom: 4px; }
.tree { background: #fff; border: 1px solid #b5b0ac; border-left: 0; }
.tree li { height: 18px; display: flex; align-items: center; white-space: nowrap; }
.tree li > i { width: 20px; flex: none; padding-left: 4px; }
.tree li svg { width: 16px; height: 16px; margin-right: 6px; }
.browser-tree { height: 390px; flex: none; padding-top: 1px; }
.child { padding-left: 42px; }
.tree .child svg { width: 13px; height: 13px; margin-right: 7px; }
.closed::before { content: ""; display: block; border: solid transparent; border-width: 4.500px 0 4.500px 5px; border-left-color: #444; }
.opened::before { content: ""; display: block; border: solid transparent; border-width: 5px 4.500px 0; border-top-color: #444; width: 0; }
.tree li > i.opened { padding-left: 2px; }
.layer-tools i { margin: 0 -2px 0 -4px; }
.layer-tools i + svg { margin-left: 2px; }
.splitter { height: 5px; flex: none; background: repeating-linear-gradient(90deg, #aaa 0 1px, transparent 1px 3px) 106px 2px / 17px 1px no-repeat; }
.layer-tree { flex: 1; font-weight: bold; }
.selected { background: #308cc6; color: #fff; }
.check { width: 13px; height: 13px; margin-right: 7px; color: #000; background: #fff; border: 1px solid #999; font: 12px/12px "DejaVu Sans", sans-serif; text-align: center; }
.swatch { width: 16px; height: 16px; margin-right: 6px; background: #6690a2; border: 1px solid #4f6c79; }
.selected u { text-underline-offset: 2px; }
.canvas { flex: 1; min-width: 0; margin-top: 1px; background: #fff; border: solid #b5b0ac; border-width: 1px 0 1px 1px; overflow: hidden; }
.map { display: block; width: 390px; height: 110px; margin: 385px 0 0 -1px; }

.status { height: 29px; flex: none; background: #efebe7; display: flex; align-items: center; font-size: 9px; overflow: hidden; }
.locator { width: 248px; height: 23px; flex: none; display: flex; align-items: center; gap: 7px; padding-left: 8px; border: 1px solid #aaa6a2; border-radius: 3px; background: #fff; color: #858585; font-size: 12px; }
.locator svg { width: 13px; height: 14px; }
.clip { flex: none; overflow: hidden; white-space: nowrap; }
.clip-a { margin-left: 8px; width: 15px; }
.clip-b { margin-left: 9px; width: 4px; direction: rtl; }
.clip-c { margin-left: 13px; width: 4px; direction: rtl; }
.clip-d { margin-left: 7px; width: 4px; }
.field { flex: none; height: 23px; line-height: 21px; background: #fff; border: 1px solid #aaa6a2; border-radius: 3px; padding-left: 3px; }
.coord { width: 93px; margin-left: 3px; }
.mouse { width: 16px; height: 16px; margin-left: 4px; }
.scale { width: 96px; margin-left: 3px; display: flex; justify-content: space-between; }
.scale i { width: 20px; height: 21px; border-left: 1px solid #c4c0bc; background: linear-gradient(#fff, #efebe7); padding: 8px 5px; }
.scale b { display: block; }
.lock { width: 14px; height: 16px; margin-left: 11px; }
.zoom { width: 85px; margin-left: 4px; padding-left: 4px; }

/* attribute tables */
.table-window { height: 1051px; margin-top: 2px; flex: none; background: #efebe7; display: flex; flex-direction: column; overflow: hidden; }
.results { width: 634px; margin-left: 3px; }
.joined { width: 634px; margin-left: 6px; }
.table-tools { height: 31px; flex: none; display: flex; align-items: center; padding: 0 0 2px 3px; }
.table-tools svg { width: 25px; height: 16px; }
.table-tools i { width: 7px; height: 11px; border-right: 2px solid #dcd9d5; position: relative; left: -1px; }
.grid-area { height: 994px; flex: none; display: grid; grid-template: 978px 15px / 1fr 15px; border-top: 1px solid #aca8a4; }
.viewport { overflow: hidden; background: #fff; }
.row { display: flex; height: 30px; width: max-content; }
.row.head { height: 19px; }
.row:nth-child(odd) { background: #f6f5f3; }
.cell { flex: none; width: 100px; height: 30px; padding: 0 4px 0 3px; line-height: 30px; border-right: 1px solid #bfbcb9; border-bottom: 1px solid #bfbcb9; white-space: pre; overflow: hidden; }
.joined .cell { padding-left: 4px; }
.row .cell.num { text-align: right; padding-right: 4px; }
.row .cell.index { width: 39px; line-height: 32px; padding-left: 3px; background: linear-gradient(#fbf8f4, #edeae5); border-color: #b0aca8; }
.head .cell, .row.head .cell.index { height: 19px; line-height: 20px; text-align: center; background: linear-gradient(#faf8f5, #ebe8e4); border-bottom-color: #aaa6a2; padding: 0; }
.joined .cell:nth-child(5) { width: 88px; }
.head .sorted { display: flex; justify-content: flex-end; align-items: center; gap: 11px; padding-right: 3px; }
.sorted::after { content: ""; border: solid transparent; border-width: 5px 4px 0; border-top-color: #444; }
.vscroll { background: #e4e3df; display: flex; flex-direction: column; border-left: 1px solid #bbb7b3; }
.vscroll span { height: 27px; background: linear-gradient(90deg, #fff, #f3f1ee); border-bottom: 1px solid #bbb7b3; margin-bottom: auto; }
.arrow { flex: none; height: 14px; background: linear-gradient(#fdfcfb, #f0edea); border: 0 solid #bbb7b3; display: flex; align-items: center; justify-content: center; }
.arrow::before { content: ""; border: 4px solid transparent; }
.up { border-bottom-width: 1px; }
.down { border-top-width: 1px; }
.up::before { border-width: 0 4px 5px; border-bottom-color: #444; }
.down::before { border-width: 5px 4px 0; border-top-color: #444; }
.left::before { border-width: 4.500px 5px 4.500px 0; border-right-color: #444; }
.right::before { border-width: 4.500px 0 4.500px 5px; border-left-color: #444; }
.hscroll { background: #e4e3df; display: flex; border-bottom: 1px solid #bbb7b3; border-top: 1px solid #bbb7b3; }
.hscroll .arrow { width: 14px; height: 13px; }
.left { border-right-width: 1px; }
.right { border-left-width: 1px; }
.hscroll span { width: 66px; background: linear-gradient(#fff, #f3f1ee); border-right: 1px solid #bbb7b3; margin-right: auto; }
.joined .hscroll span { width: 63px; }
.corner { border-left: 1px solid #bbb7b3; border-bottom: 1px solid #bbb7b3; }
.table-footer { flex: 1; display: flex; align-items: center; padding: 0 3px 2px; }
.table-footer button { width: 144px; height: 23px; margin-right: auto; padding: 0 0 0 5px; display: flex; align-items: center; gap: 4px; font: inherit; color: #111; background: linear-gradient(#fff, #efebe7); border: 1px solid #aaa6a2; border-radius: 3px; white-space: nowrap; }
.table-footer button svg { width: 15px; height: 16px; }
.table-footer button i { border: solid transparent; border-width: 3px 3px 0; border-top-color: #444; margin-top: 13px; margin-left: -1px; }
.view { width: 15px; height: 15px; }
.active { width: 24px; height: 23px; margin-left: 5px; background: #dcd8d5; border: 1px solid #aaa6a2; border-radius: 3px; display: flex; align-items: center; justify-content: center; }
```
FILE: app.js
```js
// precinct, clinton, trump, johnson, stein, registered total
const precincts = [
  [11103, 887, 316, 40, 34, 659], [11105, 50, 19, 0, 1, 62], [11108, 1228, 190, 54, 55, 985],
  [11113, 0, 0, 0, 0, 0], [11200, 1056, 185, 37, 33, 804], [11205, 1020, 127, 21, 43, 728],
  [11206, 787, 158, 16, 16, 526], [11208, 440, 45, 13, 13, 291], [11212, 1104, 452, 68, 59, 918],
  [11216, 488, 42, 16, 18, 304], [11217, 362, 140, 17, 18, 283], [11221, 941, 483, 69, 40, 842],
  [11224, 929, 526, 55, 34, 732], [11226, 804, 447, 53, 32, 655], [11227, 1099, 1100, 95, 21, 859],
  [11233, 1, 4, 0, 0, 1], [11239, 2, 0, 0, 0, 3], [11302, 738, 748, 77, 23, 657],
  [11305, 625, 700, 59, 27, 618], [11310, 971, 779, 61, 41, 801], [11312, 544, 797, 56, 9, 547],
  [11314, 484, 546, 38, 12, 413], [11402, 1136, 351, 42, 39, 833], [11406, 644, 922, 78, 17, 677],
  [11411, 878, 1031, 77, 26, 843], [11413, 804, 1005, 64, 26, 857], [11416, 849, 783, 70, 31, 945],
  [11419, 695, 751, 63, 25, 820], [11421, 787, 870, 61, 21, 831], [11424, 607, 675, 48, 19, 716],
  [11427, 621, 801, 63, 21, 774], [11432, 740, 835, 52, 24, 844],
];

const cell = (text, cls = "") => `<div class="cell ${cls}">${text}</div>`;
const row = (cells, cls = "") => `<div class="row ${cls}">${cells.join("")}</div>`;
const num = (n) => cell(n, "num");

function fill(id, heads, toCells, sorted) {
  const head = row([cell("", "index"), ...heads.map((h) => cell(h, h === sorted ? "sorted" : ""))], "head");
  const body = precincts.map((p, i) => row([cell(i + 1, "index"), ...toCells(p)]));
  document.getElementById(id).innerHTML = head + body.join("");
}

fill("results-grid", ["pct16", "pres_clinton", "pres_trump", "pres_johnson", "pres_stein", "pres_lariva"],
  ([id, c, t, j, s]) => [cell("065-" + id), num(c), num(t), num(j), num(s), num("")]);

fill("joined-grid", ["sVotingPre", "SUM_lTotal", "VPMapping", "065-result", "065-resu_1", "065-resu_2"],
  ([id, c, t, , , total]) => {
    const code = String(id);
    return [
      cell(code + ".00000…"),
      cell((total + ".").padEnd(11, "0") + "…"),
      cell(code.slice(0, 2) + "-" + code.slice(2)),
      cell("065-" + id), num(c), num(t),
    ];
  }, "VPMapping");

// Urban precinct boundaries: many short stepped lines, denser toward the west.
let seed = 7;
const rnd = () => (seed = (seed * 16807) % 2147483647) / 2147483647;
function cluster(x, y, w, h, count, size) {
  let d = "";
  for (let i = 0; i < count; i++) {
    d += `M${(x + rnd() * w).toFixed(0)} ${(y + rnd() * h).toFixed(0)}`;
    for (let k = 0; k < 4; k++) {
      const step = ((rnd() - 0.5) * size).toFixed(0);
      d += rnd() < 0.2 ? `l${step} ${((rnd() - 0.5) * size).toFixed(0)}` : (k % 2 ? `h${step}` : `v${step}`);
    }
  }
  return `<path d="${d}"/>`;
}
document.getElementById("mesh").innerHTML =
  cluster(40, 58, 150, 100, 150, 24) +
  cluster(140, 65, 160, 45, 80, 26) +
  cluster(100, 110, 220, 100, 105, 40) +
  cluster(140, 180, 70, 60, 40, 28) +
  cluster(180, 200, 70, 95, 80, 26) +
  cluster(260, 130, 60, 60, 50, 24) +
  cluster(230, 200, 110, 100, 26, 50) +
  cluster(310, 90, 90, 80, 12, 56) +
  cluster(400, 65, 70, 100, 36, 34) +
  cluster(430, 110, 60, 90, 36, 28) +
  cluster(480, 165, 70, 45, 44, 26) +
  cluster(400, 200, 150, 95, 12, 70) +
  cluster(520, 110, 60, 80, 6, 40) +
  cluster(555, 230, 60, 60, 5, 40) +
  cluster(1075, 195, 40, 32, 8, 22);
```
